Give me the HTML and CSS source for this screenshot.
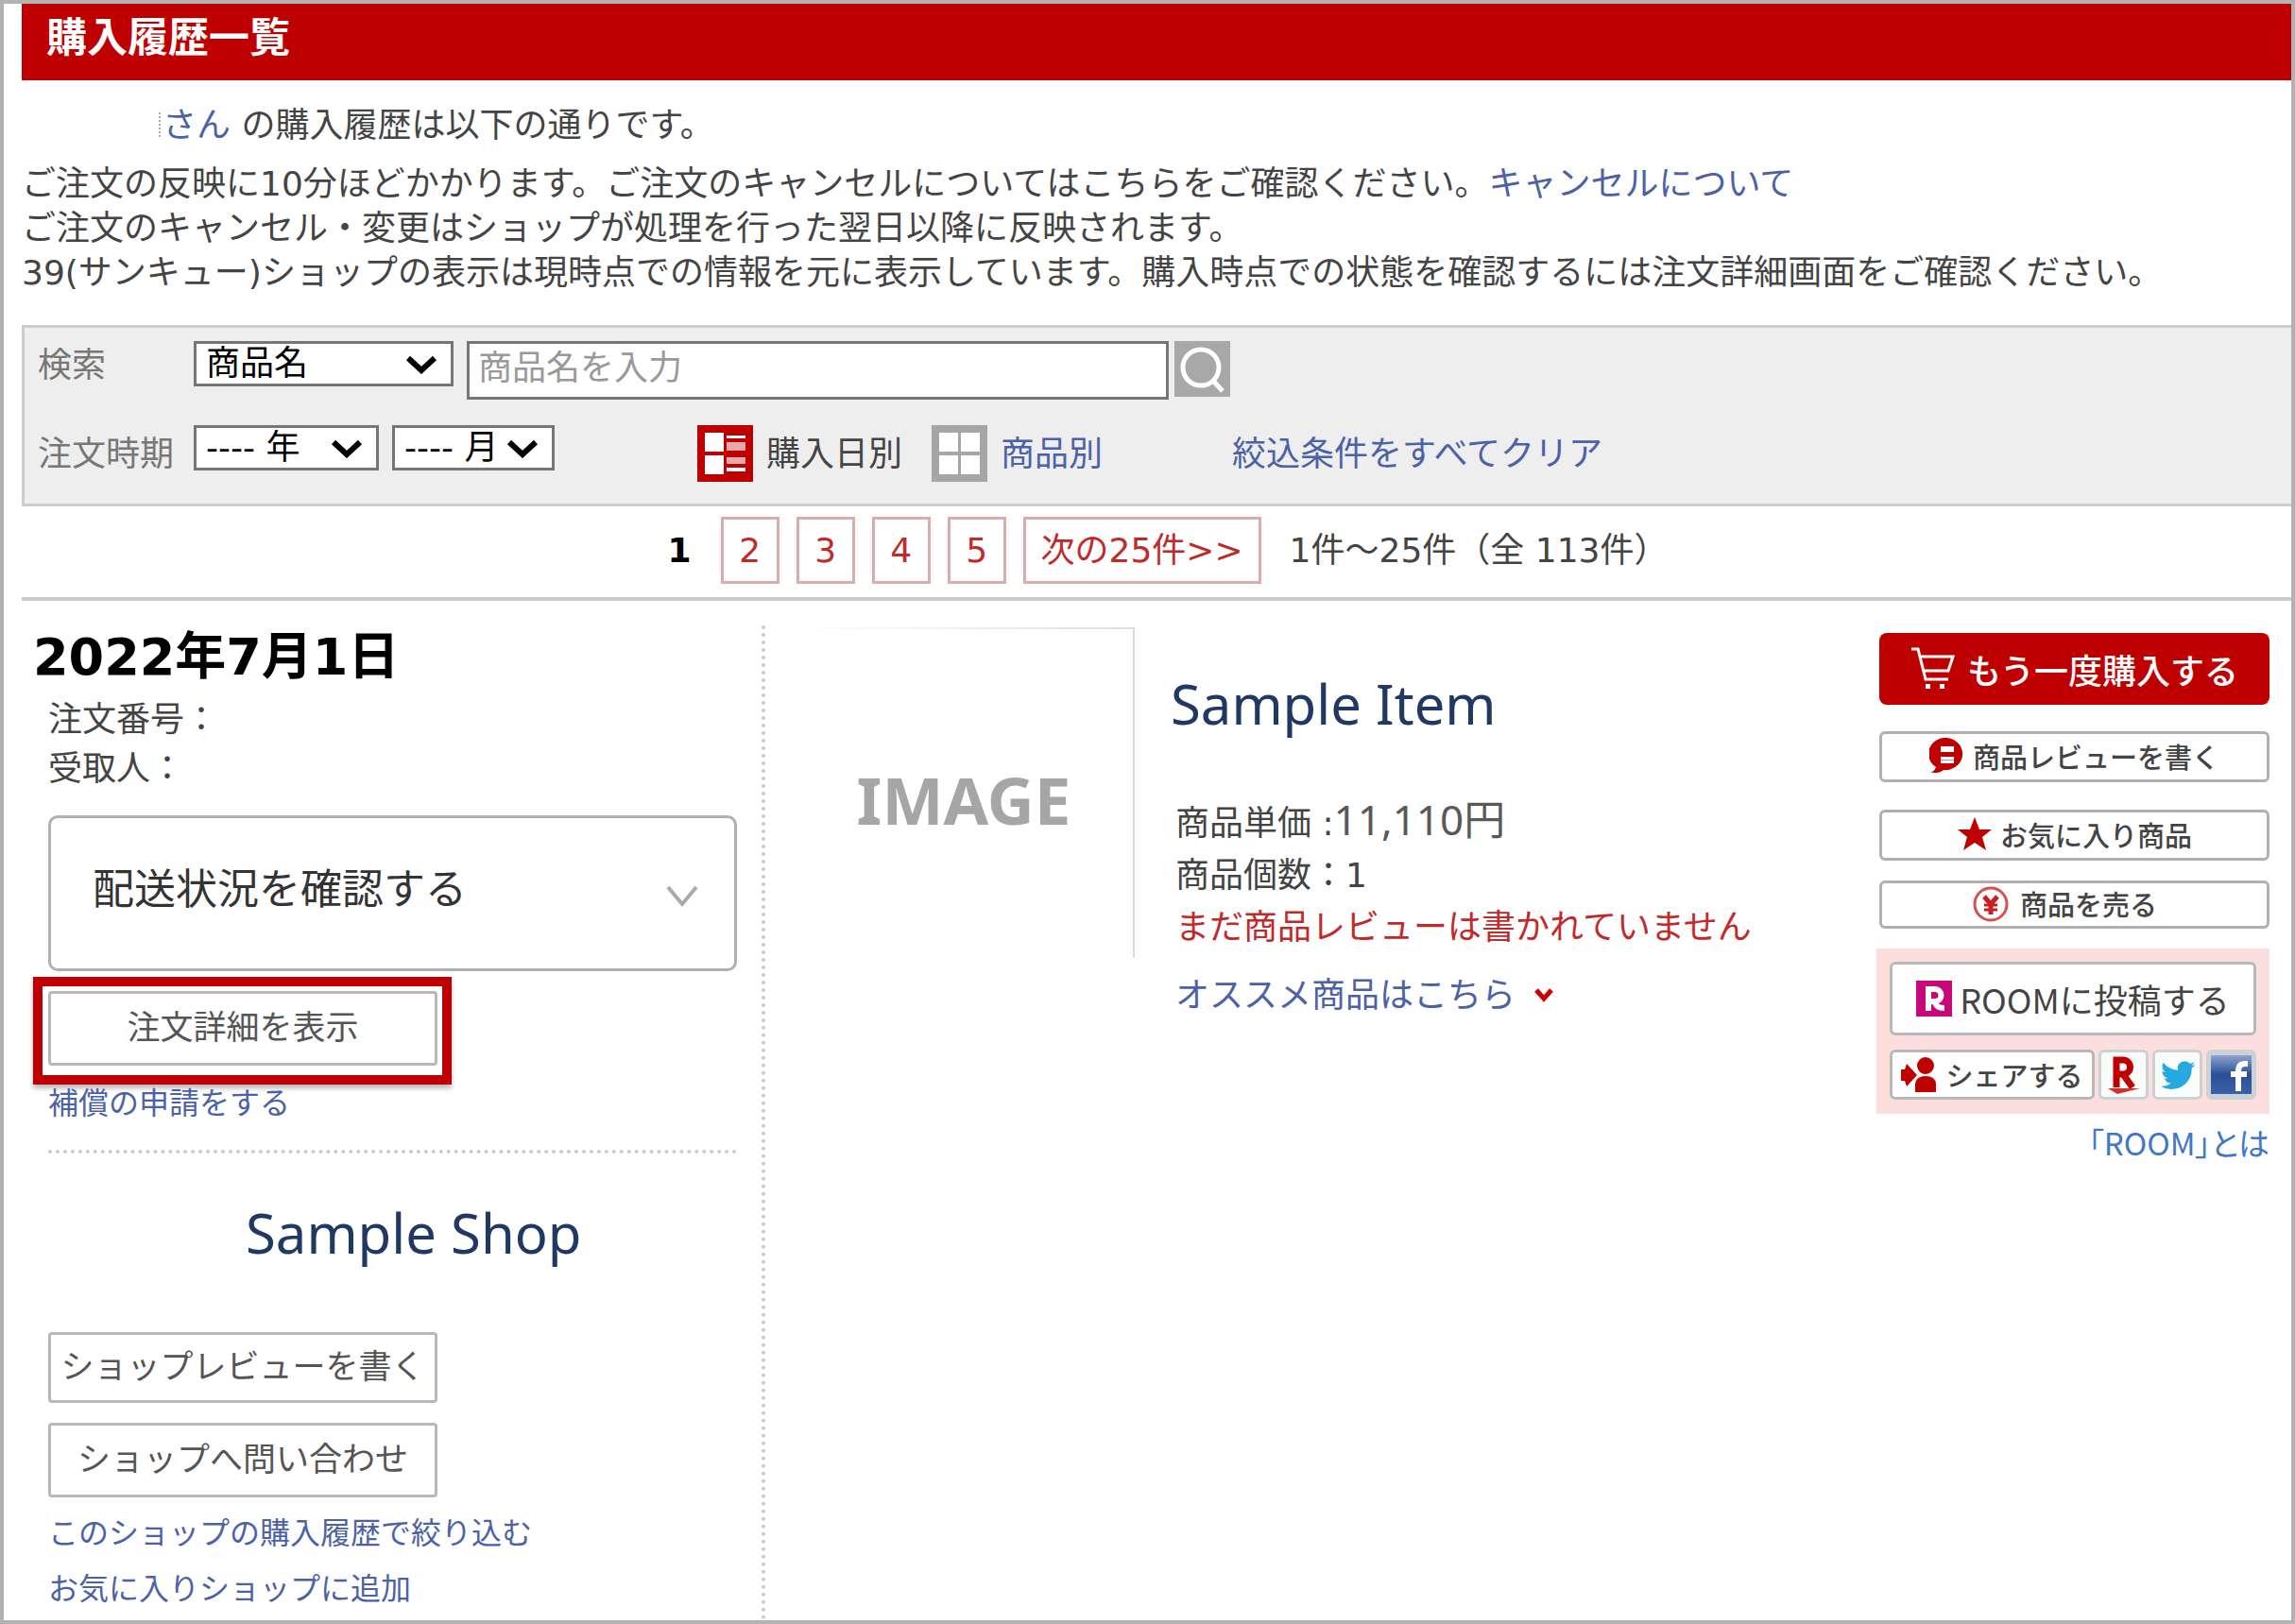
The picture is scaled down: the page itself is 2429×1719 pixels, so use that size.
FILE: index.html
```html
<!DOCTYPE html>
<html lang="ja">
<head>
<meta charset="utf-8">
<meta name="viewport" content="width=device-width, initial-scale=1">
<title>購入履歴一覧</title>
<link rel="stylesheet" href="styles.css">
</head>
<body>
<div class="page">
  <header class="title-bar"><h1>購入履歴一覧</h1></header>

  <section class="intro">
    <p class="greeting"><a href="#member">さん</a> の購入履歴は以下の通りです。</p>
    <p class="notes">ご注文の反映に10分ほどかかります。ご注文のキャンセルについてはこちらをご確認ください。<a href="#cancel">キャンセルについて</a><br>
    ご注文のキャンセル・変更はショップが処理を行った翌日以降に反映されます。<br>
    39(サンキュー)ショップの表示は現時点での情報を元に表示しています。購入時点での状態を確認するには注文詳細画面をご確認ください。</p>
  </section>

  <form class="filters">
    <div class="filter-row filter-search">
      <label class="filter-label" for="field">検索</label>
      <span class="select select-field">
        <select id="field"><option>商品名</option></select>
        <svg class="caret" viewBox="0 0 34 20"><path d="M3 3l14 13L31 3"/></svg>
      </span>
      <input class="keyword" type="text" placeholder="商品名を入力" aria-label="商品名を入力">
      <button class="search-button" type="button" aria-label="検索">
        <svg viewBox="0 0 59 59"><circle cx="28" cy="28" r="19"/><path d="M41 42l10 11"/></svg>
      </button>
    </div>
    <div class="filter-row filter-period">
      <label class="filter-label" for="year">注文時期</label>
      <span class="select select-year">
        <select id="year"><option>---- 年</option></select>
        <svg class="caret" viewBox="0 0 34 20"><path d="M3 3l14 13L31 3"/></svg>
      </span>
      <span class="select select-month">
        <select id="month" aria-label="月"><option>---- 月</option></select>
        <svg class="caret" viewBox="0 0 34 20"><path d="M3 3l14 13L31 3"/></svg>
      </span>
      <span class="view view-date">
        <svg class="view-icon" viewBox="0 0 59 60"><path fill="#bf0000" d="M0 0h59v60H0z"/><path fill="#fff" d="M8 8h20v20H8zM8 32h20v20H8zM31 11h20v3H31zM31 45h20v4H31z"/><path fill="#e9a9a9" d="M31 18h20v9H31zM31 34h20v7H31z"/></svg>
        購入日別
      </span>
      <a class="view view-item" href="#items">
        <svg class="view-icon" viewBox="0 0 59 60"><path fill="#a6a6a6" d="M0 0h59v60H0z"/><path fill="#fff" d="M8 8h20v20H8zM31 8h20v20H31zM8 32h20v20H8zM31 32h20v20H31z"/></svg>
        商品別
      </a>
      <a class="clear" href="#clear">絞込条件をすべてクリア</a>
    </div>
  </form>

  <nav class="pager" aria-label="ページ">
    <strong class="current">1</strong>
    <a class="page-link" href="#2">2</a>
    <a class="page-link" href="#3">3</a>
    <a class="page-link" href="#4">4</a>
    <a class="page-link" href="#5">5</a>
    <a class="page-link next" href="#next">次の25件&gt;&gt;</a>
    <span class="count">1件～25件（全 113件）</span>
  </nav>

  <main class="order">
    <section class="order-info">
      <h2>2022年7月1日</h2>
      <div class="order-body">
        <p class="order-meta">注文番号：<br>受取人：</p>
        <button class="delivery" type="button">配送状況を確認する
          <svg viewBox="0 0 34 24"><path d="M2 2l15 18L32 2"/></svg>
        </button>
      </div>
      <div class="highlight"><button class="outline-button" type="button">注文詳細を表示</button></div>
      <div class="order-body">
        <a class="small-link claim" href="#claim">補償の申請をする</a>
        <h3 class="shop-name">Sample Shop</h3>
        <button class="outline-button shop-review" type="button">ショップレビューを書く</button>
        <button class="outline-button shop-contact" type="button">ショップへ問い合わせ</button>
        <ul class="shop-links">
          <li><a class="small-link" href="#narrow">このショップの購入履歴で絞り込む</a></li>
          <li><a class="small-link" href="#favshop">お気に入りショップに追加</a></li>
        </ul>
      </div>
    </section>

    <section class="item">
      <div class="thumb">IMAGE</div>
      <div class="item-info">
        <h3 class="item-name">Sample Item</h3>
        <ul class="item-details">
          <li>商品単価 :<span class="price">11,110円</span></li>
          <li>商品個数：1</li>
          <li class="alert">まだ商品レビューは書かれていません</li>
        </ul>
        <a class="recommend" href="#recommend">オススメ商品はこちら
          <svg viewBox="0 0 20 18"><path d="M2 3l8 9 8-9"/></svg>
        </a>
      </div>
    </section>

    <aside class="actions">
      <button class="buy" type="button">
        <svg viewBox="0 0 48 46"><g fill="none" stroke="#fff" stroke-width="3"><path d="M1 2h7l8 32h24M11 10h34l-5 15H15"/></g><path fill="#fff" d="M16 39h5v5h-5zM31 39h5v5h-5z"/></svg>
        もう一度購入する
      </button>
      <button class="action review" type="button">
        <svg viewBox="0 0 38 38"><path fill="#bf0000" d="M19 0a18 17 0 1 1-4 34c-3 3-9 4-14 2 3 0 5-2 6-5A18 17 0 0 1 19 0z"/><path fill="#fff" d="M12 9h14v6H12zM12 20h14v7H12z"/><path fill="#e08080" d="M12 23h14v1H12z"/></svg>
        商品レビューを書く
      </button>
      <button class="action favorite" type="button">
        <svg viewBox="0 0 38 38"><path fill="#bf0000" d="M19 1l5 13h13L27 22l4 14-12-8-12 8 4-14L1 14h13z"/></svg>
        お気に入り商品
      </button>
      <button class="action sell" type="button">
        <svg viewBox="0 0 38 38"><circle cx="19" cy="19" r="17" fill="#fff" stroke="#d85050" stroke-width="3"/><path fill="none" stroke="#c62020" stroke-width="5" d="M12 11l7 8 7-8M19 19v11"/><path fill="none" stroke="#c62020" stroke-width="3" d="M12 20h14M12 25h14"/></svg>
        商品を売る
      </button>
      <div class="share-panel">
        <button class="room" type="button">
          <svg viewBox="0 0 38 38"><path fill="#c7077a" d="M0 0h38v38H0z"/><path fill="none" stroke="#fff" stroke-width="6" d="M13 32V9h7a6 6 0 0 1 0 13h-7M19 22c3 6 5 7 11 7"/></svg>
          ROOMに投稿する
        </button>
        <div class="share-row">
          <button class="share" type="button">
            <svg viewBox="0 0 38 38"><g fill="#bf0000"><circle cx="26" cy="9" r="9"/><path d="M15 37V28q1-8 11-8t11 8v9zM0 13h4L6 7l11 12L6 31l-2-6H0z"/></g></svg>
            シェアする
          </button>
          <button class="social social-r" type="button" aria-label="Rakuten">
            <svg viewBox="0 0 47 47"><path fill="none" stroke="#bf0000" stroke-width="7" d="M16 37V8h7a7 7 0 0 1 0 15h-7M23 23l10 14"/><path fill="#cf3030" d="M7 38h34l-24 6z"/></svg>
          </button>
          <button class="social" type="button" aria-label="Twitter">
            <svg viewBox="0 0 24 24"><g transform="translate(3 3) scale(.78)"><path fill="#25a9e0" d="M24 4.600c-.9.400-1.800.700-2.800.8 1-.6 1.800-1.600 2.200-2.700-1 .6-2 1-3.100 1.200A4.900 4.900 0 0 0 11.900 8.400 14 14 0 0 1 1.700 3.200a4.900 4.900 0 0 0 1.500 6.500c-.8 0-1.600-.2-2.200-.6 0 2.300 1.600 4.400 3.900 4.900-.7.200-1.500.2-2.200.1.600 2 2.400 3.400 4.600 3.400A9.900 9.900 0 0 1 0 19.500 14 14 0 0 0 21.500 7.100c1-.7 1.800-1.600 2.500-2.500z"/></g></svg>
          </button>
          <button class="social social-f" type="button" aria-label="Facebook">
            <svg viewBox="0 0 47 47"><defs><linearGradient id="fb" x2="0" y2="1"><stop stop-color="#8ea3cf"/><stop offset=".5" stop-color="#2b4f96"/><stop offset="1" stop-color="#3a62a8"/></linearGradient></defs><path fill="url(#fb)" d="M2 3h43v41H2z"/><path fill="none" stroke="#fff" stroke-width="6" d="M41 12h-3q-7 0-7 8v21M23 23h17"/></svg>
          </button>
        </div>
      </div>
      <a class="about-room" href="#room">「ROOM」とは</a>
    </aside>
  </main>
</div>
</body>
</html>
```

FILE: styles.css
```css
* { box-sizing: border-box; }

body {
  margin: 0;
  background: #fff;
  color: #444;
  font-family: "DejaVu Sans", "Noto Sans CJK JP", sans-serif;
  font-size: 36px;
  line-height: 47px;
}

h1, h2, h3, p, ul { margin: 0; padding: 0; }
ul { list-style: none; }
a { color: #4c62a8; text-decoration: none; }
svg { display: block; flex: none; }
button, input, select { font: inherit; color: inherit; margin: 0; }
button {
  display: flex;
  align-items: center;
  justify-content: center;
  padding: 0;
  background: #fff;
  white-space: nowrap;
}

.page {
  display: flex;
  flex-direction: column;
  min-height: 100vh;
  padding-left: 19px;
  border: 4px solid #b2b2b2;
}

.title-bar {
  padding: 3px 26px 12px;
  background: #bf0000;
  color: #fff;
}
.title-bar h1 { font-size: 43px; line-height: 66px; }

/* Introduction */
.greeting { margin: 24px 0 15px; padding-left: 145px; }
.greeting::before {
  content: "";
  display: inline-block;
  height: 26px;
  margin-right: 2px;
  border-left: 2px dotted #9fb0cc;
}

/* Search and filters */
.filters {
  display: flex;
  flex-direction: column;
  gap: 27px;
  margin-top: 32px;
  padding: 14px 0 23px 14px;
  border: 3px solid #ccc;
  border-right: 0;
  background: #eee;
}
.filter-row { display: flex; align-items: flex-start; }
.filter-label { width: 165px; padding-top: 2px; color: #777; }
.filter-period { align-items: center; }
.filter-period .filter-label { padding-top: 0; }
.filter-period .select { align-self: flex-start; }

.select { position: relative; }
.select select {
  display: block;
  width: 100%;
  height: 48px;
  padding: 0 10px;
  border: 3px solid #767676;
  border-radius: 0;
  background: #fff;
  color: #000;
  line-height: 42px;
  appearance: none;
}
.caret {
  position: absolute;
  top: 15px;
  right: 17px;
  width: 34px;
  height: 20px;
  fill: none;
  stroke: #000;
  stroke-width: 6;
  pointer-events: none;
}
.select-field { width: 275px; margin-right: 14px; }
.select-year { width: 196px; margin-right: 14px; }
.select-month { width: 172px; margin-right: 151px; }

.keyword {
  width: 743px;
  height: 62px;
  margin-right: 6px;
  padding: 0 9px 6px;
  border: 3px solid #767676;
  background: #fff;
}
.keyword::placeholder { color: #999; opacity: 1; }
.search-button { width: 59px; height: 59px; border: 0; background: #a8a8a8; }
.search-button svg { width: 59px; fill: none; stroke: #fff; stroke-width: 5; }

.view { display: flex; align-items: center; gap: 14px; }
.view-icon { width: 59px; height: 60px; }
.view-date { margin-right: 31px; }
.view-item { margin-right: 137px; }

/* Paging */
.pager {
  display: flex;
  align-items: center;
  justify-content: center;
  gap: 18px;
  padding: 11px 0 14px 24px;
  border-bottom: 4px solid #ccc;
}
.current { margin-right: 13px; color: #000; }
.page-link {
  width: 62px;
  border: 3px solid #dfaaaa;
  color: #c22a2a;
  line-height: 65px;
  text-align: center;
}
.next { width: 252px; }
.count { margin-left: 12px; }

/* Order */
.order {
  display: grid;
  grid-template-columns: 787px 1fr 416px;
  flex: 1;
  margin-top: 26px;
  padding-right: 23px;
}

.order-info {
  padding: 0 26px 0 12px;
  border-right: 4px dotted #ccc;
}
.order-info h2 { color: #000; font-size: 54px; line-height: 68px; }
.order-body { padding-left: 16px; }
.order-meta { margin: 6px 0 23px; line-height: 52px; }

.delivery {
  justify-content: space-between;
  width: 100%;
  height: 165px;
  padding: 0 38px 8px 44px;
  border: 3px solid #b0b0b0;
  border-radius: 10px;
  color: #333;
  font-size: 44px;
}
.delivery svg { width: 34px; margin-top: 14px; fill: none; stroke: #aaa; stroke-width: 4; }

.highlight {
  width: 443px;
  margin-top: 6px;
  padding: 5px 5px 10px 6px;
  border: 10px solid #bf0000;
  box-shadow: 0 4px 5px #bbb;
}
.outline-button {
  width: 412px;
  height: 79px;
  border: 3px solid #b8b8b8;
  border-radius: 4px;
  color: #555;
  font-size: 35px;
}
.small-link { font-size: 32px; }
.claim {
  display: block;
  padding-bottom: 29px;
  border-bottom: 4px dotted #ccc;
  line-height: 40px;
}

.shop-name, .item-name {
  color: #1f3864;
  font-family: "Noto Sans", sans-serif;
  font-size: 58px;
  font-weight: 400;
  line-height: 80px;
}
.shop-name { margin: 44px 0 65px; padding-left: 209px; }
.shop-review { height: 75px; margin-bottom: 21px; }
.shop-links { margin-top: 8px; line-height: 58px; }

/* Purchased item */
.item { display: flex; align-items: flex-start; gap: 38px; padding-left: 31px; }
.thumb {
  width: 360px;
  margin-top: 2px;
  padding-top: 14px;
  border-right: 2px solid #d8dcdc;
  background: linear-gradient(to right, #fff, #dde0e0) top / 100% 2px no-repeat;
  color: #a6a6a6;
  font: bold 69px/336px "Noto Sans", sans-serif;
  text-align: center;
}
.item-name { margin: 43px 0 59px; }
.item-details, .recommend { padding-left: 5px; line-height: 55px; }
.price {
  color: #595959;
  font-family: "Noto Sans", "Noto Sans CJK JP", sans-serif;
  font-size: 44px;
  line-height: 47px;
}
.alert { color: #c22a2a; }
.recommend { display: flex; align-items: center; gap: 20px; margin-top: 17px; }
.recommend svg { width: 20px; fill: none; stroke: #c00; stroke-width: 5; }

/* Actions */
.actions { display: flex; flex-direction: column; padding-top: 8px; }
.actions button { font-family: "Noto Sans CJK JP", sans-serif; }
.buy, .action { margin-left: 3px; }
.buy {
  gap: 12px;
  height: 76px;
  margin-bottom: 28px;
  border: 0;
  border-radius: 8px;
  background: #bf0000;
  color: #fff;
  font-weight: 500;
}
.buy svg { width: 48px; }
.action {
  gap: 8px;
  height: 54px;
  padding-bottom: 2px;
  border: 3px solid #b0b0b0;
  border-radius: 6px;
  font-size: 29px;
  font-weight: 500;
}
.action svg, .room svg, .share svg { width: 38px; }
.review { margin-bottom: 29px; }
.favorite, .sell { margin-bottom: 21px; }
.sell { gap: 12px; height: 51px; padding-right: 20px; }

.share-panel {
  display: flex;
  flex-direction: column;
  gap: 15px;
  padding: 14px 14px 15px;
  background: #fddede;
}
.room {
  gap: 8px;
  height: 78px;
  border: 3px solid #b8b8b8;
  border-radius: 6px;
  font-size: 36px;
}
.share-row { display: flex; gap: 4px; }
.share {
  flex: 1;
  gap: 9px;
  height: 53px;
  border: 3px solid #b8b8b8;
  border-radius: 6px;
  font-size: 29px;
  font-weight: 500;
}
.social {
  width: 53px;
  height: 53px;
  border: 3px solid #ccd2d2;
  border-radius: 6px;
  background: #fafcfa;
}
.social svg { width: 47px; }
.social-f { background: #ccd2d8; }
.about-room {
  color: #3f78c4;
  font-family: "Noto Sans CJK JP", sans-serif;
  font-size: 33px;
  font-feature-settings: "palt";
  line-height: 60px;
  text-align: right;
}
```
